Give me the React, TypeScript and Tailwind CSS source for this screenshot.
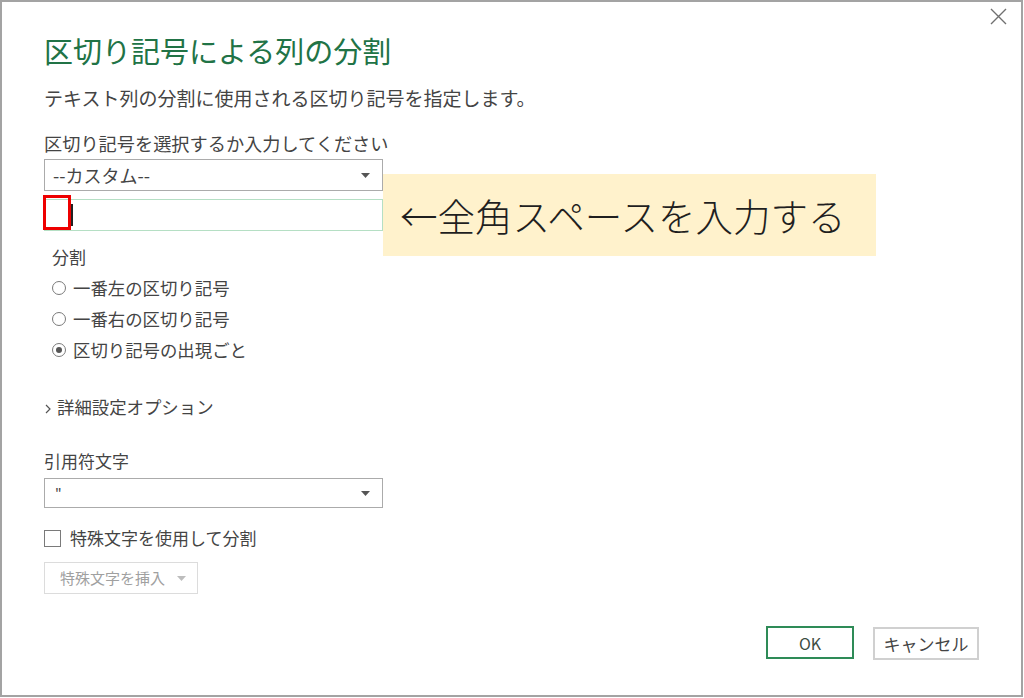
import React from "react";

const Arrow = ({ color = "#555" }: { color?: string }) => (
  <svg width="9" height="5" viewBox="0 0 9 5">
    <path d="M0 0 H9 L4.5 5 Z" fill={color} />
  </svg>
);

const Radio = ({ checked, label }: { checked?: boolean; label: string }) => (
  <div className="flex h-[31px] items-center pl-[8px]">
    <span className="flex h-[14px] w-[14px] items-center justify-center rounded-full border border-[#7a7a7a]">
      {checked && <span className="h-[6px] w-[6px] rounded-full bg-[#555]" />}
    </span>
    <span className="ml-[7px] text-[17.4px] leading-[24px] text-[#444]">{label}</span>
  </div>
);

export default function App() {
  return (
    <div className="h-[698px] w-[1024px] bg-white font-['Noto_Sans_CJK_JP',sans-serif]">
      <div className="relative flex h-[697px] w-[1023px] flex-col border-2 border-[#a3a3a3] pl-[42px]">
        <svg className="absolute right-[14px] top-[6px]" width="17" height="17" viewBox="0 0 17 17">
          <path d="M1 1 L16 16 M16 1 L1 16" stroke="#707070" strokeWidth="1.4" />
        </svg>

        <div className="mt-[30px] text-[29px] leading-[36px] text-[#217346]">区切り記号による列の分割</div>
        <div className="mt-[18px] text-[19px] leading-[24px] text-[#444]">
          テキスト列の分割に使用される区切り記号を指定します。
        </div>
        <div className="mt-[21px] text-[18.2px] leading-[24px] text-[#444]">区切り記号を選択するか入力してください</div>

        <div className="mt-[4px] flex h-[32px] w-[339px] items-center justify-between border border-[#ababab] pl-[8px] pr-[12px]">
          <span className="text-[18px] leading-[24px] text-[#444]">--カスタム--</span>
          <Arrow />
        </div>

        <div className="mt-[8px] flex h-[32px] w-[339px] items-center border border-[#b5dfc4]">
          <span className="ml-[25px] h-[22px] w-[3px] bg-[#222]" />
        </div>

        <div className="mt-[14px] pl-[8px] text-[17px] leading-[24px] text-[#444]">分割</div>
        <div className="mt-[3px] flex flex-col">
          <Radio label="一番左の区切り記号" />
          <Radio label="一番右の区切り記号" />
          <Radio checked label="区切り記号の出現ごと" />
        </div>

        <div className="mt-[30px] flex items-center">
          <svg width="8" height="10" viewBox="0 0 8 10" className="mt-[4px]">
            <path d="M2 1 L6 5 L2 9" stroke="#555" strokeWidth="1.2" fill="none" />
          </svg>
          <span className="ml-[5px] text-[17.4px] leading-[24px] text-[#444]">詳細設定オプション</span>
        </div>

        <div className="mt-[30px] text-[17px] leading-[24px] text-[#444]">引用符文字</div>
        <div className="mt-[5px] flex h-[30px] w-[339px] items-center justify-between border border-[#ababab] pl-[10px] pr-[12px]">
          <span className="text-[14px] leading-[20px] text-[#444]">"</span>
          <Arrow />
        </div>

        <div className="mt-[18px] flex h-[24px] items-center">
          <span className="h-[17px] w-[17px] border border-[#7a7a7a] bg-white" />
          <span className="ml-[9px] text-[17px] leading-[24px] text-[#444]">特殊文字を使用して分割</span>
        </div>

        <div className="mt-[12px] flex h-[32px] w-[154px] items-center border border-[#dcdcdc] pl-[15px]">
          <span className="text-[15px] leading-[20px] text-[#a0a0a0]">特殊文字を挿入</span>
          <span className="ml-[12px] mt-[1px]">
            <Arrow color="#bdbdbd" />
          </span>
        </div>

        <div className="mt-[32px] flex justify-end gap-[19px] pr-[42px]">
          <button className="flex h-[33px] w-[88px] items-center justify-center border-2 border-[#2e8b57] text-[16px] text-[#3d4d43]">
            OK
          </button>
          <button className="mt-[1px] flex h-[33px] w-[106px] items-center justify-center border-2 border-[#d0d0d0] text-[17px] text-[#444]">
            キャンセル
          </button>
        </div>

        <div className="absolute left-[381px] top-[172px] flex h-[82px] w-[493px] items-center bg-[#fff2cc] pl-[17px]">
          <span className="text-[37.5px] font-light leading-[44px] text-[#1f1f1f]">←全角スペースを入力する</span>
        </div>
        <div className="absolute left-[41px] top-[193px] h-[35px] w-[28px] border-[3px] border-[#ee0000]" />
      </div>
    </div>
  );
}
